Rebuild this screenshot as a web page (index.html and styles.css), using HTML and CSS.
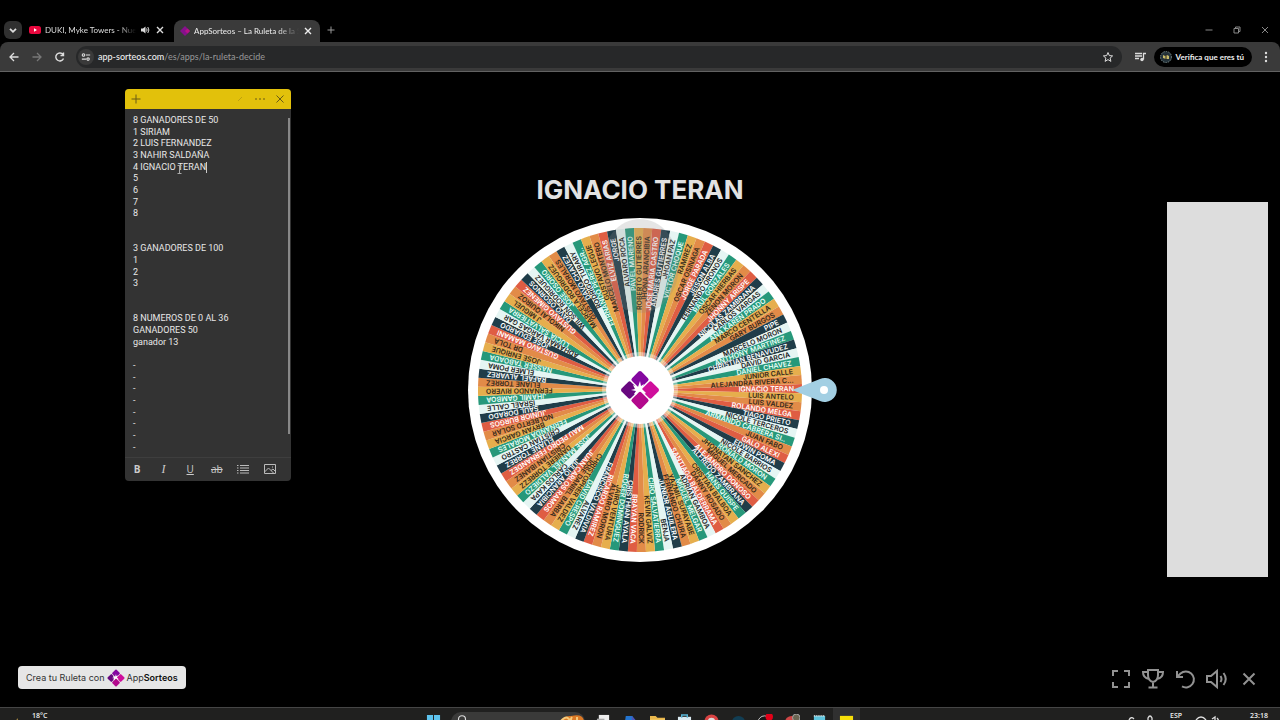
FILE: index.html
```html
<!DOCTYPE html>
<html lang="es">
<head>
<meta charset="utf-8">
<title>AppSorteos – La Ruleta de la Suerte</title>
<link rel="stylesheet" href="styles.css">
</head>
<body>
<svg class="defs" aria-hidden="true">
  <symbol id="brand" viewBox="-20 -20 40 40">
    <g transform="rotate(45)">
      <rect x="-14" y="-14" width="13.3" height="13.3" rx="2" fill="#8408a0"/>
      <rect x="0.7" y="-14" width="13.3" height="13.3" rx="2" fill="#cf0f9c"/>
      <rect x="-14" y="0.7" width="13.3" height="13.3" rx="2" fill="#68087f"/>
      <rect x="0.7" y="0.7" width="13.3" height="13.3" rx="2" fill="#b3098d"/>
    </g>
    <path d="M0-9 1-4 4-6 2-1 6 3 4 4 0 0-4 5-6 4-4 1-9 0-5-1-7-5-2-3Z" fill="#fff"/>
  </symbol>
  <symbol id="cross" viewBox="0 0 10 10"><path d="M2 2l6 6M8 2l-6 6" fill="none" stroke="currentColor" stroke-width="1.4"/></symbol>
</svg>

<header class="browser">
  <div class="tabs">
    <button class="tab-menu" aria-label="Buscar pestañas"><svg viewBox="0 0 10 10"><path d="M2.5 4 5 6.500 7.500 4" fill="none" stroke="currentColor" stroke-width="1.5"/></svg></button>
    <div class="tab">
      <svg class="tab-icon" viewBox="0 0 12 12"><rect y="2" width="12" height="8" rx="2.500" fill="#e8083e"/><path d="M5 4.200 8 6 5 7.800Z" fill="#fff"/></svg>
      <span class="tab-title">DUKI, Myke Towers - Nueva</span>
      <svg class="tab-sound" viewBox="0 0 10 10"><path d="M1 3.500h2L5.500 1.500v7L3 6.500H1Z" fill="currentColor"/><path d="M6.500 3.500q1.200 1.500 0 3M7.800 2q2.200 3 0 6" fill="none" stroke="currentColor"/></svg>
      <button class="tab-close" aria-label="Cerrar pestaña"><svg viewBox="0 0 10 10"><use href="#cross"/></svg></button>
    </div>
    <div class="tab active">
      <svg class="tab-icon" viewBox="0 0 12 12"><path d="M6 1 11 6 6 11 1 6Z" fill="#86108c"/><path d="M8.500 3.500 11 6 8.500 8.500 6 6Z" fill="#b81288"/></svg>
      <span class="tab-title">AppSorteos – La Ruleta de la Su</span>
      <button class="tab-close" aria-label="Cerrar pestaña"><svg viewBox="0 0 10 10"><use href="#cross"/></svg></button>
    </div>
    <button class="new-tab" aria-label="Nueva pestaña"><svg viewBox="0 0 10 10"><path d="M5 1.500v7M1.500 5h7" stroke="currentColor" fill="none"/></svg></button>
    <div class="window-buttons">
      <button aria-label="Minimizar"><svg viewBox="0 0 10 10"><path d="M1.500 5h7" stroke="currentColor"/></svg></button>
      <button aria-label="Restaurar"><svg viewBox="0 0 10 10"><path d="M2 3.500h4.500V8H2ZM3.500 3.500V2H8v4.500H6.500" fill="none" stroke="currentColor"/></svg></button>
      <button aria-label="Cerrar"><svg viewBox="0 0 10 10"><path d="M2 2l6 6M8 2 2 8" stroke="currentColor"/></svg></button>
    </div>
  </div>
  <div class="toolbar">
    <button class="nav" aria-label="Atrás"><svg viewBox="0 0 12 12"><path d="M10.500 6H2M6 2 2 6l4 4" fill="none" stroke="currentColor" stroke-width="1.300"/></svg></button>
    <button class="nav dim" aria-label="Adelante"><svg viewBox="0 0 12 12"><path d="M1.500 6H10M6 2l4 4-4 4" fill="none" stroke="currentColor" stroke-width="1.300"/></svg></button>
    <button class="nav" aria-label="Recargar"><svg viewBox="0 0 12 12"><path d="M9.500 7.500A4 4 0 1 1 9 3.500M9.500 1.500v3h-3" fill="none" stroke="currentColor" stroke-width="1.400"/></svg></button>
    <div class="omnibox">
      <button class="site-info" aria-label="Información del sitio"><svg viewBox="0 0 12 12"><path d="M6 3.500h5M1 8.500h5" stroke="currentColor" stroke-width="1.300"/><circle cx="3" cy="3.500" r="1.500" fill="none" stroke="currentColor" stroke-width="1.300"/><circle cx="8.500" cy="8.500" r="1.500" fill="none" stroke="currentColor" stroke-width="1.300"/></svg></button>
      <span class="url"><b>app-sorteos.com</b>/es/apps/la-ruleta-decide</span>
      <button class="star" aria-label="Añadir a marcadores"><svg viewBox="0 0 12 12"><path d="M6 1.500 7.300 4.600l3.300.3-2.500 2.200.8 3.300L6 8.600l-2.900 1.800.8-3.300L1.400 4.900l3.300-.3Z" fill="none" stroke="currentColor"/></svg></button>
    </div>
    <button class="media" aria-label="Control de contenido"><svg viewBox="0 0 12 12"><path d="M1 2.500h7M1 5h7M1 7.500h4M9.500 8.500V2.500H12" fill="none" stroke="currentColor" stroke-width="1.300"/><circle cx="8" cy="8.500" r="1.700" fill="currentColor"/></svg></button>
    <button class="profile"><svg viewBox="0 0 12 12"><circle cx="6" cy="6" r="5.500" fill="#25333b" stroke="#788" stroke-dasharray="1.500 1"/><path d="M3 4l2 1 2-1 2 1v3L6 8 3 7Z" fill="#c8bb69"/><path d="M6 3v6" stroke="#222"/></svg>Verifica que eres tú</button>
    <button class="menu" aria-label="Menú"><svg viewBox="0 0 12 12"><g fill="currentColor"><circle cx="6" cy="2" r="1.200"/><circle cx="6" cy="6" r="1.200"/><circle cx="6" cy="10" r="1.200"/></g></svg></button>
  </div>
</header>

<main class="stage">
  <h1 class="winner">IGNACIO TERAN</h1>
  <svg class="wheel" id="wheel" viewBox="-172 -172 344 344" role="img" aria-label="Ruleta"></svg>
  <aside class="panel"></aside>
  <a class="badge" href="#">Crea tu Ruleta con <svg viewBox="0 0 40 40"><use href="#brand"/></svg><span>App<b>Sorteos</b></span></a>
  <nav class="actions">
    <button aria-label="Pantalla completa"><svg viewBox="0 0 22 22"><path d="M3 8V3h5M14 3h5v5M19 14v5h-5M8 19H3v-5"/></svg></button>
    <button aria-label="Ganadores"><svg viewBox="0 0 22 22"><path d="M6 2h10v5q0 6-5 7-5-1-5-7ZM6 4H1q0 6 6 7M16 4h5q0 6-6 7M11 14v5M6.500 19.500h9"/></svg></button>
    <button aria-label="Reiniciar"><svg viewBox="0 0 22 22"><path d="M3 3v6h6M3.500 8.500l3-3A8 8 0 1 1 8 18.400"/></svg></button>
    <button aria-label="Sonido"><svg viewBox="0 0 22 22"><path d="M1 8h4l6-5v16l-6-5H1ZM14.500 8q2 3 0 6M17.500 5q4.500 6 0 12"/></svg></button>
    <button aria-label="Salir"><svg viewBox="0 0 22 22"><path d="M5.500 5.500l11 11M16.500 5.500l-11 11"/></svg></button>
  </nav>
</main>

<section class="note" aria-label="Nota">
  <div class="note-head">
    <button aria-label="Nueva nota"><svg viewBox="0 0 10 10"><path d="M5 .5v9M.5 5h9"/></svg></button>
    <span class="spacer"></span>
    <button class="faint" aria-label="Anclar"><svg viewBox="0 0 10 10"><path d="M3 7 7 3"/></svg></button>
    <button aria-label="Más"><svg viewBox="0 0 10 10"><path d="M0 5h2M4 5h2M8 5h2"/></svg></button>
    <button aria-label="Cerrar nota"><svg viewBox="0 0 10 10"><path d="M1.500 1.500l7 7M8.500 1.500l-7 7"/></svg></button>
  </div>
  <div class="note-body">
    <p>8 GANADORES DE 50</p><p>1 SIRIAM</p><p>2 LUIS FERNANDEZ</p><p>3 NAHIR SALDAÑA</p><p class="caret">4 IGNACIO TERAN</p><p>5</p><p>6</p><p>7</p><p>8</p><p></p><p></p>
    <p>3 GANADORES DE 100</p><p>1</p><p>2</p><p>3</p><p></p><p></p>
    <p>8 NUMEROS DE 0 AL 36</p><p>GANADORES 50</p><p>ganador 13</p><p></p>
    <p>-</p><p>-</p><p>-</p><p>-</p><p>-</p><p>-</p><p>-</p><p>-</p>
    <span class="scrollbar"></span>
    <svg class="ibeam" viewBox="0 0 5 9"><path d="M.5.5h4M2.500.5v8M.5 8.500h4" stroke="#aaa" fill="none"/></svg>
  </div>
  <div class="note-tools">
    <button aria-label="Negrita"><b>B</b></button>
    <button aria-label="Cursiva"><i>I</i></button>
    <button aria-label="Subrayado"><u>U</u></button>
    <button aria-label="Tachado"><s>ab</s></button>
    <button aria-label="Lista"><svg viewBox="0 0 12 10"><path d="M0 1.500h1.500M3 1.500h9M0 4h1.500M3 4h9M0 6.500h1.500M3 6.500h9M0 9h1.500M3 9h9"/></svg></button>
    <button aria-label="Imagen"><svg viewBox="0 0 12 10"><path d="M.5.5h11v9H.5ZM.5 8l4-4 5 5M7 6.500l2-1.500 2.500 2.500M8 3h1"/></svg></button>
  </div>
</section>

<footer class="taskbar">
  <div class="weather"><svg viewBox="0 0 14 14"><path d="M6 0q1 5 6 7-1 5-6 5t-6-5q5-1 6-7Z" fill="#e9bb52"/></svg><span>18°C</span></div>
  <div class="apps">
    <button class="app" aria-label="Inicio"><svg viewBox="0 0 16 16"><path d="M1 1h6.500v6.500H1ZM8.500 1H15v6.500H8.500ZM1 8.500h6.500V15H1ZM8.500 8.500H15V15H8.500Z" fill="#5dc3ee"/></svg></button>
    <button class="search" aria-label="Buscar"><svg viewBox="0 0 16 16"><circle cx="8" cy="6" r="4" fill="none" stroke="#ddd" stroke-width="1.300"/></svg><svg class="doodle" viewBox="0 0 26 16"><path d="M0 16Q2 1 12 2q12-3 13 5l1 9Z" fill="#db7926"/><path d="M2 7q6-7 9 0M13 3q-3 4 2 8M18 3v9" fill="none" stroke="#f7ca7a" stroke-width="2"/></svg></button>
    <button class="app" aria-label="Vista de tareas"><svg viewBox="0 0 16 16"><path d="M3 1h11v11H3Z" fill="#eee"/><path d="M1 5h8v9H1Z" fill="#aaa"/></svg></button>
    <button class="app" aria-label="Copilot"><svg viewBox="0 0 16 16"><path d="M3 2h7l4 6-4 7H1Z" fill="#2375d0"/><path d="M9 2l5 5-3 6Z" fill="#5052b5"/></svg></button>
    <button class="app" aria-label="Explorador"><svg viewBox="0 0 16 16"><path d="M0 2h6l2 2h8v11H0Z" fill="#e9b74c"/><path d="M0 6h16v9H0Z" fill="#fad779"/></svg></button>
    <button class="app" aria-label="Tienda"><svg viewBox="0 0 16 16"><path d="M1 3h14v12H1Z" fill="#dcebf2"/><path d="M5 4V1h6v3" fill="none" stroke="#59b7d9" stroke-width="1.500"/></svg></button>
    <button class="app" aria-label="Chrome"><svg viewBox="0 0 16 16"><circle cx="8" cy="8" r="7.500" fill="#d94343"/><circle cx="8" cy="8" r="4" fill="#ddd"/></svg></button>
    <button class="app" aria-label="Edge"><svg viewBox="0 0 16 16"><circle cx="8" cy="9" r="7" fill="#123e54"/></svg></button>
    <button class="app" aria-label="OBS"><svg viewBox="0 0 16 16"><circle cx="7" cy="9" r="7" fill="#171717" stroke="#ccc"/><circle cx="12" cy="3" r="4" fill="#e30018"/></svg></button>
    <button class="app" aria-label="Chrome perfil"><svg viewBox="0 0 16 16"><circle cx="7" cy="9" r="7" fill="#ce4545"/><circle cx="12" cy="4" r="4" fill="#6a6653" stroke="#aaa"/></svg></button>
    <button class="app" aria-label="Bloc de notas"><svg viewBox="0 0 16 16"><path d="M2 2h12v13H2Z" fill="#5ec4dd"/><path d="M2 2h12" stroke="#ddd" stroke-dasharray="1 1" stroke-width="2"/></svg></button>
    <button class="app current" aria-label="Notas rápidas"><svg viewBox="0 0 16 16"><path d="M1 2h14v13H1Z" fill="#f7df09"/></svg></button>
  </div>
  <div class="tray">
    <svg viewBox="0 0 26 14"><path d="M1 8q2-4 5-1M20 10V6q2-4 4 0v4" fill="none" stroke="#ddd" stroke-width="1.300"/></svg>
    <span class="lang">ESP</span>
    <svg viewBox="0 0 26 14"><path d="M1 8q5-6 10 0M17 7l3-2v8M22 6q3 3 0 6" fill="none" stroke="#ddd" stroke-width="1.300"/></svg>
    <time>23:18</time>
  </div>
</footer>
<script src="wheel.js"></script>
</body>
</html>
```

FILE: styles.css
```css
* { box-sizing: border-box; }
body {
  margin: 0;
  height: 100vh;
  display: flex;
  flex-direction: column;
  overflow: hidden;
  background: #000;
  color: #ddd;
  font-family: Lato, "Noto Sans", sans-serif;
  font-size: 8px;
}
button {
  margin: 0;
  padding: 0;
  border: 0;
  background: none;
  color: inherit;
  font: inherit;
  display: flex;
  align-items: center;
  justify-content: center;
}
svg { display: block; flex: none; }
.defs { position: absolute; width: 0; height: 0; }

.browser { border-bottom: 1px solid #626262; }
.tabs {
  display: flex;
  align-items: center;
  height: 42px;
  padding: 18px 1px 0 4px;
}
.tab-menu { width: 18px; height: 18px; border-radius: 6px; background: #303030; }
.tab-menu svg { width: 12px; }
.tab {
  display: flex;
  align-items: center;
  width: 146px;
  height: 24px;
  padding: 0 2px 0 7px;
  gap: 4px;
}
.tab.active {
  height: 22px;
  margin: 2px 0 0 6px;
  padding: 0 6px 0 5px;
  gap: 3px;
  border-radius: 8px 8px 0 0;
  background: #3a3a3a;
  color: #eee;
}
.tab-icon { width: 12px; height: 12px; }
.tab-title {
  flex: 1;
  min-width: 0;
  overflow: hidden;
  white-space: nowrap;
  mask-image: linear-gradient(to right, #000 80%, transparent);
}
.tab-sound { width: 10px; }
.tab-close svg { width: 10px; }
.tab-close { width: 12px; }
.new-tab { width: 22px; color: #999; }
.new-tab svg { width: 10px; }
.window-buttons { display: flex; margin-left: auto; color: #888; }
.window-buttons button { width: 28px; }
.window-buttons svg { width: 10px; }

.toolbar {
  display: flex;
  align-items: center;
  height: 29px;
  padding: 0 8px;
  background: #3a3a3a;
  border-radius: 8px 8px 0 0;
}
.toolbar svg { width: 12px; }
.nav { width: 12px; margin-right: 11px; }
.nav:nth-child(3) { margin-right: 10px; }
.dim { color: #777; }
.omnibox {
  display: flex;
  align-items: center;
  flex: 1;
  height: 22px;
  padding: 0 8px 0 2px;
  gap: 4px;
  border-radius: 11px;
  background: #272829;
}
.site-info { width: 16px; height: 16px; border-radius: 8px; background: #3a3a3a; }
.site-info svg { width: 10px; }
.url { flex: 1; color: #999; font-size: 9px; }
.url b { font-weight: 500; color: #eee; }
.media { width: 16px; margin: 0 6px 0 10px; }
.profile {
  gap: 4px;
  height: 20px;
  padding: 0 8px 0 6px;
  border-radius: 10px;
  background: #000;
  color: #eee;
  font-weight: 700;
}
.menu { width: 12px; margin-left: 8px; }

.stage {
  flex: 1;
  min-height: 0;
  display: grid;
  grid-template-columns: 1fr auto 1fr;
  grid-template-rows: 1fr auto 1fr;
}
.winner {
  grid-area: 1 / 2;
  align-self: end;
  justify-self: center;
  margin: 0 0 12px;
  font: 700 26px/32px Inter, sans-serif;
  color: #e2e2e2;
}
.wheel { grid-area: 2 / 2; width: 344px; height: 344px; overflow: visible; }
.wheel text { font: 600 7px Inter, sans-serif; text-anchor: end; dominant-baseline: central; }
.panel {
  grid-area: 1 / 3 / -1 / 4;
  place-self: center end;
  width: 101px;
  height: 375px;
  margin-right: 12px;
  background: #ddd;
}
.badge {
  grid-area: 3 / 1;
  place-self: end start;
  display: flex;
  align-items: center;
  gap: 2px;
  height: 23px;
  margin: 0 0 18px 18px;
  padding: 0 8px;
  border-radius: 4px;
  background: #e6e6e6;
  color: #333;
  font: 9px Inter, sans-serif;
  text-decoration: none;
}
.badge svg { width: 18px; height: 18px; }
.badge b { font-weight: 600; color: #111; }
.actions {
  grid-area: 3 / 3;
  place-self: end end;
  display: flex;
  gap: 10px;
  margin: 0 20px 17px 0;
}
.actions svg {
  width: 22px;
  height: 22px;
  fill: none;
  stroke: #929292;
  stroke-width: 2;
}

.note {
  position: absolute;
  left: 125px;
  top: 89px;
  width: 166px;
  height: 392px;
  display: flex;
  flex-direction: column;
  overflow: hidden;
  border-radius: 4px;
  background: #333;
}
.note-head {
  display: flex;
  align-items: center;
  gap: 10px;
  height: 20px;
  padding: 0 6px;
  background: #e2c10b;
}
.note-head svg { width: 10px; fill: none; stroke: #685b16; }
.note-head .faint { opacity: .3; }
.spacer { flex: 1; }
.note-body {
  position: relative;
  flex: 1;
  display: flex;
  flex-direction: column;
  justify-content: space-between;
  padding: 6px 8px 4px;
  font: 9px/11px Roboto, sans-serif;
  color: #e8e8e8;
}
.note-body p { margin: 0; height: 11px; align-self: flex-start; }
.caret { border-right: 1px solid #ccc; }
.scrollbar { position: absolute; top: 9px; right: 1px; width: 2px; height: 316px; background: #888; }
.ibeam { position: absolute; left: 52px; top: 56px; width: 5px; }
.note-tools {
  display: flex;
  align-items: center;
  justify-content: space-between;
  height: 24px;
  padding: 0 14px 2px 5px;
  border-top: 1px solid #3e3e3e;
  font: 10px/12px "Open Sans", sans-serif;
  color: #ccc;
}
.note-tools button { min-width: 14px; }
.note-tools i { font-family: "Liberation Serif", serif; font-size: 12px; }
.note-tools svg { width: 12px; fill: none; stroke: #bbb; }

.taskbar {
  display: grid;
  grid-template-columns: 1fr auto 1fr;
  height: 13px;
  overflow: hidden;
  border-top: 1px solid #454545;
  background: #20201f;
  font: 600 7px/8px "Open Sans", sans-serif;
  color: #eee;
}
.weather { display: flex; gap: 8px; padding: 4px 0 0 12px; }
.weather svg { width: 12px; }
.apps { display: flex; align-items: flex-start; }
.app { width: 27px; height: 24px; padding-top: 6px; align-items: flex-start; }
.app svg { width: 15px; }
.current { background: #303030; }
.search {
  width: 134px;
  height: 24px;
  margin: 4px 5px 0 4px;
  padding: 2px 0 0 4px;
  justify-content: space-between;
  align-items: flex-start;
  border-radius: 10px;
  background: #3a3a39;
}
.search svg { width: 14px; }
.search .doodle { width: 26px; }
.tray {
  display: flex;
  justify-content: flex-end;
  align-items: flex-start;
  padding: 4px 12px 0 0;
}
.tray svg { width: 26px; margin: 0 29px 0 13px; }
.tray svg:first-child { margin: 0 16px 0 0; }
```

FILE: wheel.js
```js
const palette = {
  r: ['#df5d43', '#fff'],
  o: ['#e28b48', '#34291d'],
  y: ['#e6ae4d', '#34291d'],
  g: ['#26987a', '#e9fff8'],
  w: ['#e5f5f3', '#222'],
  n: ['#203d49', '#fff']
};

// Clockwise from the pointer: colour key, then the name.
const slices = `r IGNACIO TERAN|y LUIS ANTELO|o LUIS VALDEZ|r ROLANDO MELGA|n TIAGO PRIETO|w NICOLE TERCEROS|g ARMANDO CABRERA SI..|o JUAN FABO|r GALO ALEXI|n EDWIN POMA|w NICOLE BARRIOS|g RONALD MORON|y JHONATAN SANCHEZ|o MIGUEL MERCADO|r ALEJANDRO DONOSO|n ALFREDO ZAMBRANA|g HANS QUISPE|y CRISTIAN BALBOA|o DANNY ROSADO|r SANTIAGO BALDERRAMA|w ADRIAN GAMBOA|g MIGUEL MELGAR|y YAZMIL SUPAYABE|o FERNANDO CHURA|n JUNIOR AGUILERA|w BENJA|g CIRO SALVATIERRA|y KEVIN GALVIZ|o RODRICK|r BRAYAN VACA|n CRISTHIAN AYALA|g ROGER DOMINGUEZ|y JAIRO VENTURA|o ALVARO MORON|r RICARDO RAMIREZ|n FRANCISCO VALDIVIA|w ALVAREZ|g DAVID CRESPO|y CHRISTOPHER VALDEZ|o JOSE DANIEL BARBA|r JUAN CARLOS RAMOS|n JULIO ARANCIBIA|w CARLOS KAPA|g JOSE MANUEL VALDIEZO|y DANIERE TORREZZ|o CRISTIAN IBANEZ|r MAU PEDRO FERNANDEZ|n ELIANE TORREZ|w CRISTIAN CASTRO|g FERNANDA MORALES|y BRYAN GARCIA|o NOLBERTO SOLAR|r JUNIOR BURGOS|n SAUL DORADO|w ISRAEL CALLE|g JHAMIL GAMBOA|y FERNANDO RIVERO|o ELIANE TORREZ|n RAFAEL ALVAREZ|w ELMER POMA|g NASSER TABOADA|y JOSE ENRIQUE|o DR TOLA|r GUSTAVO MAMANI|n JOSE EDUARDO|w ADHAMAR VARGAS GAR|g LUCIA SALVATIERRA|y J MIGUEL|o NIKOLAI QUIROZ|r GUSTAVO GIMENEZ|n DAVO OSORNOS|w WILSON RODRIGUEZ|g JOSE OSORIO|y MARCELA RODRIGUEZ|o GUSTAVO MORALES|n DAVO CHAVEZ|w RODRIGO TURARY|g FERNANDO PEREZ AGR..|y GUSTAVO LEGUE|o MARCELO MONTERO|r ELVIZ ARIAS|n JORGE|w ALVARO ROCA|g PAVEL MARENO|y ROBERTO GUTIERRES|o JHONA ARANCIBIA|r JOSE MARIA CASTRO|n ANDRES GUTIERRES|w JHOAN PAZ|g VICTOR CHOQUE|y RAMIREZ|o OSCAR OSINAGA|r JORGE PARADA|n JEISON ALBA|w FERNANDO ORONOS|g RAUL GONZALES|y OSCAR HIERBAS|o ZENON MORON|r JHONNY ARISPE|n NICOLAS ZAMBRANA|w CARLOS VARGAS|g ANA KAREN PRADO|y MARCO CENTELLA|o GARY BURGOS|n PIPE|w MARCELO MORON|g ANTHONY MARTINEZ|n CHRISTIAN BENAVUDEZ|w DAVID GARCIA|g DANIEL CHAVEZ|y JUNIOR CALLE|o ALEJANDRA RIVERA C...`.split('|');

const step = 360 / slices.length;
const spin = -0.5;
const radius = 162;
const half = step * Math.PI / 360;
const x = radius * Math.cos(half);
const y = radius * Math.sin(half);

let wedges = '';
let labels = '';
slices.forEach((entry, i) => {
  const [fill, ink] = palette[entry[0]];
  const turn = `rotate(${spin + i * step})`;
  wedges += `<path d="M0 0 ${x} ${-y}A${radius} ${radius} 0 0 1 ${x} ${y}Z" fill="${fill}" transform="${turn}"/>`;
  labels += `<text x="154" y="0" fill="${ink}" transform="${turn}">${entry.slice(2)}</text>`;
});

document.getElementById('wheel').innerHTML = `
  <circle r="172" fill="#fff"/>
  ${wedges}${labels}
  <ellipse cy="-124" rx="39" ry="47" fill="#888" opacity=".22"/>
  <circle r="38" fill="#fff" opacity=".4"/>
  <circle r="34" fill="#fff"/>
  <use href="#brand" x="-20" y="-20" width="40" height="40"/>
  <path d="M152 0 180-11A12 12 0 1 1 180 11Z" fill="#a3cfe3"/>
  <circle cx="184" r="4" fill="#fff"/>`;
```
